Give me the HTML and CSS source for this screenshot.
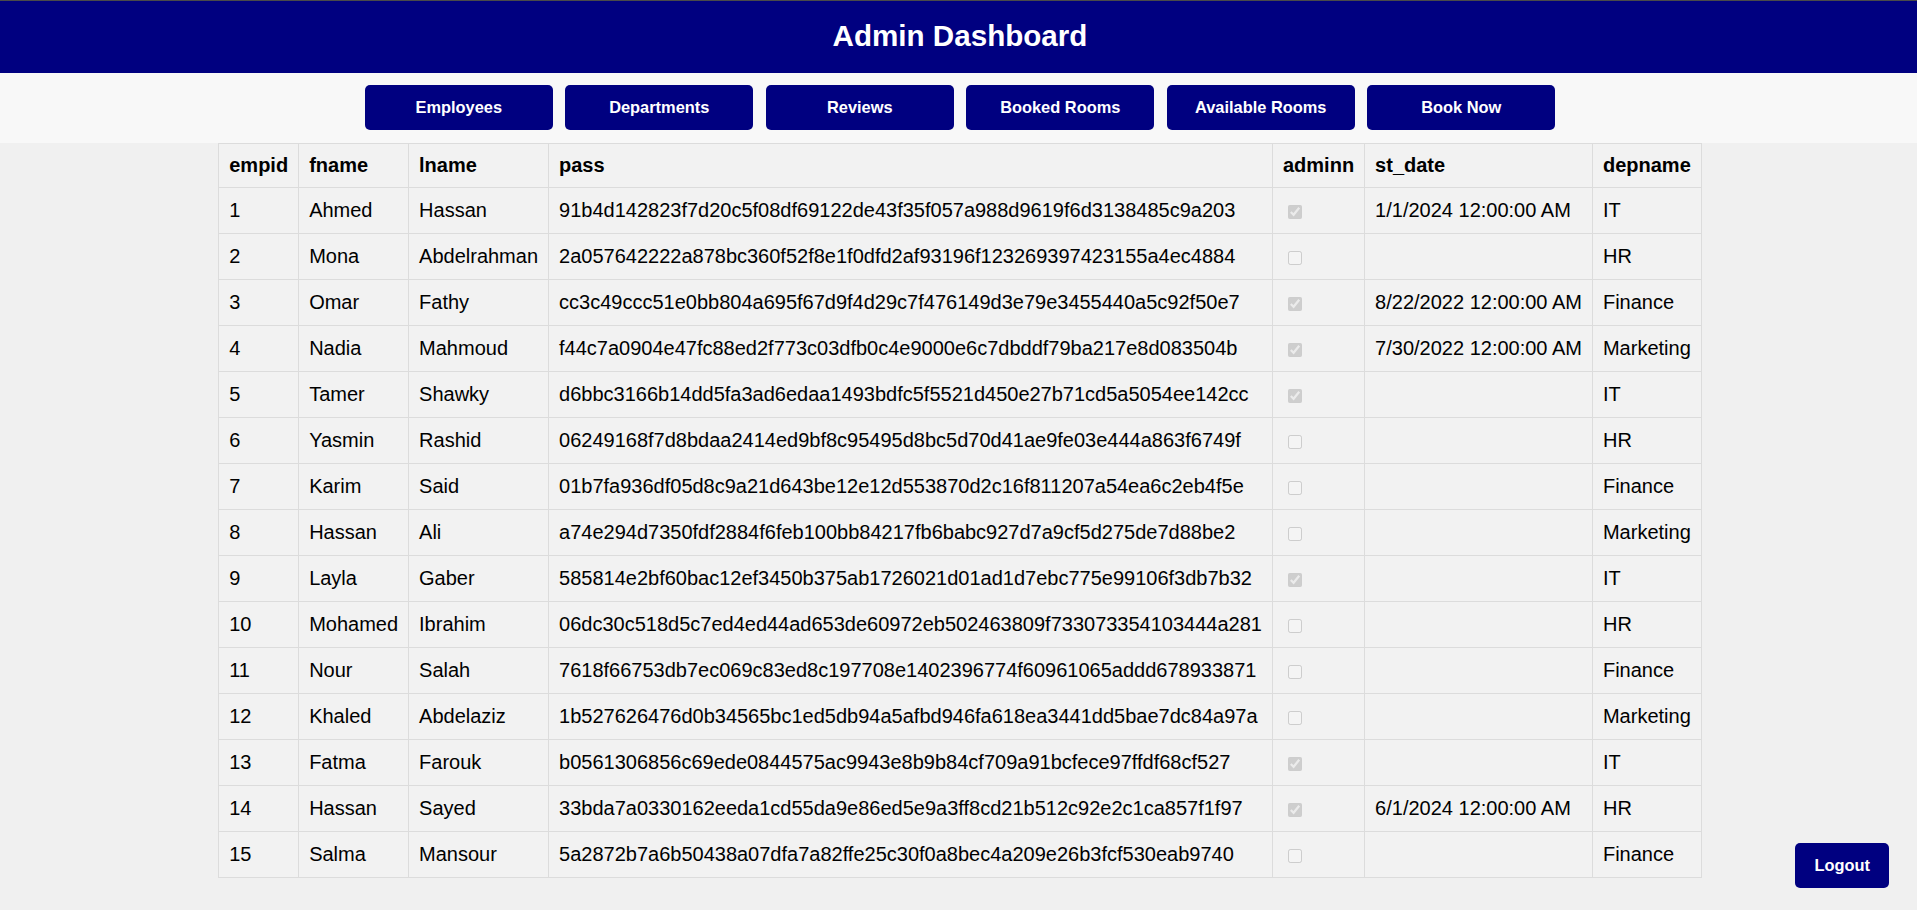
FILE: index.html
```html
<!DOCTYPE html>
<html lang="en">
<head>
<meta charset="utf-8">
<title>Admin Dashboard</title>
<link rel="stylesheet" href="styles.css">
</head>
<body>
<header class="topbar">
  <h1 class="title">Admin Dashboard</h1>
</header>
<nav class="menu">
  <button class="nav-btn">Employees</button>
  <button class="nav-btn">Departments</button>
  <button class="nav-btn">Reviews</button>
  <button class="nav-btn">Booked Rooms</button>
  <button class="nav-btn">Available Rooms</button>
  <button class="nav-btn">Book Now</button>
</nav>
<main class="content">
  <table class="grid">
    <thead>
      <tr><th>empid</th><th>fname</th><th>lname</th><th>pass</th><th>adminn</th><th>st_date</th><th>depname</th></tr>
    </thead>
    <tbody>
      <tr><td>1</td><td>Ahmed</td><td>Hassan</td><td>91b4d142823f7d20c5f08df69122de43f35f057a988d9619f6d3138485c9a203</td><td><input type="checkbox" checked disabled></td><td>1/1/2024 12:00:00 AM</td><td>IT</td></tr>
      <tr><td>2</td><td>Mona</td><td>Abdelrahman</td><td>2a057642222a878bc360f52f8e1f0dfd2af93196f123269397423155a4ec4884</td><td><input type="checkbox" disabled></td><td></td><td>HR</td></tr>
      <tr><td>3</td><td>Omar</td><td>Fathy</td><td>cc3c49ccc51e0bb804a695f67d9f4d29c7f476149d3e79e3455440a5c92f50e7</td><td><input type="checkbox" checked disabled></td><td>8/22/2022 12:00:00 AM</td><td>Finance</td></tr>
      <tr><td>4</td><td>Nadia</td><td>Mahmoud</td><td>f44c7a0904e47fc88ed2f773c03dfb0c4e9000e6c7dbddf79ba217e8d083504b</td><td><input type="checkbox" checked disabled></td><td>7/30/2022 12:00:00 AM</td><td>Marketing</td></tr>
      <tr><td>5</td><td>Tamer</td><td>Shawky</td><td>d6bbc3166b14dd5fa3ad6edaa1493bdfc5f5521d450e27b71cd5a5054ee142cc</td><td><input type="checkbox" checked disabled></td><td></td><td>IT</td></tr>
      <tr><td>6</td><td>Yasmin</td><td>Rashid</td><td>06249168f7d8bdaa2414ed9bf8c95495d8bc5d70d41ae9fe03e444a863f6749f</td><td><input type="checkbox" disabled></td><td></td><td>HR</td></tr>
      <tr><td>7</td><td>Karim</td><td>Said</td><td>01b7fa936df05d8c9a21d643be12e12d553870d2c16f811207a54ea6c2eb4f5e</td><td><input type="checkbox" disabled></td><td></td><td>Finance</td></tr>
      <tr><td>8</td><td>Hassan</td><td>Ali</td><td>a74e294d7350fdf2884f6feb100bb84217fb6babc927d7a9cf5d275de7d88be2</td><td><input type="checkbox" disabled></td><td></td><td>Marketing</td></tr>
      <tr><td>9</td><td>Layla</td><td>Gaber</td><td>585814e2bf60bac12ef3450b375ab1726021d01ad1d7ebc775e99106f3db7b32</td><td><input type="checkbox" checked disabled></td><td></td><td>IT</td></tr>
      <tr><td>10</td><td>Mohamed</td><td>Ibrahim</td><td>06dc30c518d5c7ed4ed44ad653de60972eb502463809f733073354103444a281</td><td><input type="checkbox" disabled></td><td></td><td>HR</td></tr>
      <tr><td>11</td><td>Nour</td><td>Salah</td><td>7618f66753db7ec069c83ed8c197708e1402396774f60961065addd678933871</td><td><input type="checkbox" disabled></td><td></td><td>Finance</td></tr>
      <tr><td>12</td><td>Khaled</td><td>Abdelaziz</td><td>1b527626476d0b34565bc1ed5db94a5afbd946fa618ea3441dd5bae7dc84a97a</td><td><input type="checkbox" disabled></td><td></td><td>Marketing</td></tr>
      <tr><td>13</td><td>Fatma</td><td>Farouk</td><td>b0561306856c69ede0844575ac9943e8b9b84cf709a91bcfece97ffdf68cf527</td><td><input type="checkbox" checked disabled></td><td></td><td>IT</td></tr>
      <tr><td>14</td><td>Hassan</td><td>Sayed</td><td>33bda7a0330162eeda1cd55da9e86ed5e9a3ff8cd21b512c92e2c1ca857f1f97</td><td><input type="checkbox" checked disabled></td><td>6/1/2024 12:00:00 AM</td><td>HR</td></tr>
      <tr><td>15</td><td>Salma</td><td>Mansour</td><td>5a2872b7a6b50438a07dfa7a82ffe25c30f0a8bec4a209e26b3fcf530eab9740</td><td><input type="checkbox" disabled></td><td></td><td>Finance</td></tr>
    </tbody>
  </table>
</main>
<button class="logout">Logout</button>
</body>
</html>
```
FILE: styles.css
```css
html, body {
  margin: 0;
  padding: 0;
}

body {
  background: #f0f0f0;
  font-family: "Liberation Sans", Arial, sans-serif;
  color: #000;
  border-top: 1px solid #4a4a4a;
  padding-left: 3px;
}

.topbar {
  background: #000080;
  color: #fff;
  text-align: center;
  padding: 17px 0 19px;
  margin-left: -3px;
}

.title {
  margin: 0;
  padding-left: 3px;
  font-size: 29.6px;
  line-height: 36px;
  font-weight: bold;
}

.menu {
  background: #f8f8f8;
  display: flex;
  justify-content: center;
  gap: 12.5px;
  padding: 12px 0 13px 3px;
  margin-left: -3px;
}

.nav-btn,
.logout {
  background: #000080;
  color: #fff;
  border: none;
  border-radius: 5px;
  font-family: "Liberation Sans", Arial, sans-serif;
  font-weight: bold;
  font-size: 16.4px;
  line-height: 19px;
  cursor: pointer;
}

.nav-btn {
  width: 188px;
  padding: 13px 0;
}

.content {
  display: flex;
  justify-content: center;
}

.grid {
  border-collapse: collapse;
  font-size: 20px;
  background: #f2f2f2;
}

.grid th,
.grid td {
  border: 1px solid #dcdcdc;
  text-align: left;
  white-space: nowrap;
}

.grid th {
  padding: 10px;
  font-weight: bold;
}

.grid td {
  padding: 11px 10px;
}

.grid input[type="checkbox"] {
  width: 14px;
  height: 14px;
  margin: 3px 3px 3px 5px;
  vertical-align: middle;
}

.logout {
  position: fixed;
  right: 28px;
  bottom: 22px;
  padding: 13px 19px;
}
```
